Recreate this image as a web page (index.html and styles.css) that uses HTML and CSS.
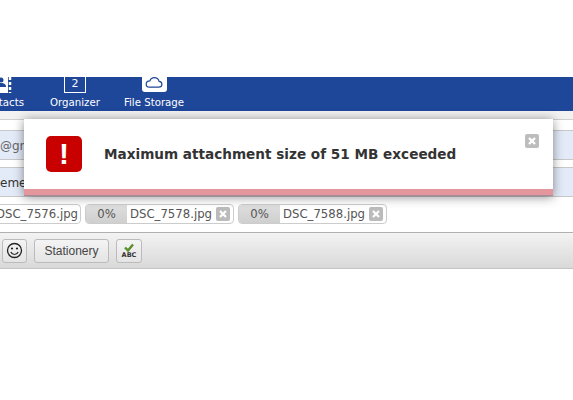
FILE: index.html
```html
<!DOCTYPE html>
<html lang="en">
<head>
    <meta charset="UTF-8">
    <title>Compose</title>
    <link rel="stylesheet" href="styles.css">
</head>
<body>
    <div class="page">
        <nav class="nav">
            <div class="nav-item nav-contacts">
                <svg class="nav-icon" width="12" height="17" viewBox="0 0 12 17">
                    <rect x="0" y="0" width="8" height="16" fill="#fff"/>
                    <circle cx="1" cy="3" r="2.500" fill="#1e4699"/>
                    <path d="M-4 10c0-3 2-4 5-4s5 1 5 4z" fill="#1e4699"/>
                    <path d="M10 0v16" stroke="#fff" stroke-width="2.500" stroke-dasharray="3 2"/>
                </svg>
                <span>Contacts</span>
            </div>
            <div class="nav-item nav-organizer">
                <div class="date-box">2</div>
                <span>Organizer</span>
            </div>
            <div class="nav-item nav-storage">
                <div class="cloud-box">
                    <svg width="18" height="11" viewBox="0 0 17 11">
                        <path d="M4 10.200h9.200c1.800 0 3.200-1.200 3.200-2.900 0-1.600-1.200-2.800-2.800-2.900C12.900 2 11 .7 8.900.7 6.800.7 5 2 4.400 3.900 2.300 4 .7 5.300.7 7.200c0 1.800 1.400 3 3.300 3z" fill="none" stroke="#1e4699" stroke-width="1.200"/>
                    </svg>
                </div>
                <span>File Storage</span>
            </div>
        </nav>

        <div class="form">
            <div class="field"><span class="field-text">@gm</span></div>
            <div class="field"><span class="field-text field-dark">eme</span></div>
        </div>

        <div class="attachments">
            <div class="chip chip-first">
                <span class="chip-name">DSC_7576.jpg</span>
            </div>
            <div class="chip">
                <span class="chip-pct">0%</span>
                <span class="chip-name">DSC_7578.jpg</span>
                <span class="chip-close">
                    <svg width="10" height="10" viewBox="0 0 10 10"><path d="M2 2l6 6M8 2l-6 6" stroke="#fff" stroke-width="2.200"/></svg>
                </span>
            </div>
            <div class="chip">
                <span class="chip-pct">0%</span>
                <span class="chip-name">DSC_7588.jpg</span>
                <span class="chip-close">
                    <svg width="10" height="10" viewBox="0 0 10 10"><path d="M2 2l6 6M8 2l-6 6" stroke="#fff" stroke-width="2.200"/></svg>
                </span>
            </div>
        </div>

        <div class="toolbar">
            <button class="tool tool-smiley">
                <svg width="17" height="17" viewBox="0 0 17 17">
                    <circle cx="8.500" cy="8.500" r="7" fill="none" stroke="#222" stroke-width="1.300"/>
                    <circle cx="6" cy="6.500" r="1.100" fill="#222"/>
                    <circle cx="11" cy="6.500" r="1.100" fill="#222"/>
                    <path d="M4.800 10c.8 1.700 2.100 2.500 3.700 2.500s2.900-.8 3.700-2.500" fill="none" stroke="#222" stroke-width="1.200"/>
                </svg>
            </button>
            <button class="tool tool-text">Stationery</button>
            <button class="tool tool-spell">
                <svg width="14" height="9" viewBox="0 0 14 9"><path d="M3 4.500l3 3 5-6" fill="none" stroke="#5a8f2c" stroke-width="2.400"/></svg>
                <span class="abc">ABC</span>
            </button>
        </div>

        <div class="alert">
            <div class="alert-body">
                <div class="alert-icon">!</div>
                <div class="alert-text">Maximum attachment size of 51 MB exceeded</div>
                <span class="alert-close">
                    <svg width="12" height="12" viewBox="0 0 12 12"><path d="M3 3l6 6M9 3l-6 6" stroke="#fff" stroke-width="2.400"/></svg>
                </span>
            </div>
            <div class="alert-bar"></div>
        </div>
    </div>
</body>
</html>
```

FILE: styles.css
```css
html, body { margin: 0; padding: 0; background: #fff; }
body { font-family: "DejaVu Sans", sans-serif; color: #333; }
.page { position: relative; width: 573px; height: 400px; overflow: hidden; padding-top: 77px; box-sizing: border-box; }

.nav { height: 34px; background: #1e4699; display: flex; overflow: hidden; color: #fff; font-size: 10.200px; }
.nav-item { position: relative; display: flex; flex-direction: column; align-items: center; }
.nav-item span { position: absolute; top: 20px; white-space: nowrap; }
.nav-contacts { width: 24px; }
.nav-contacts .nav-icon { position: absolute; left: 0; top: 0; }
.nav-contacts span { right: 0; }
.nav-organizer { width: 50px; margin-left: 26px; }
.date-box { width: 20px; height: 15px; border: 1px solid #fff; border-top: 0; text-align: center; font-size: 11px; line-height: 13px; }
.nav-storage { width: 60px; margin-left: 24px; }
.cloud-box { width: 25px; height: 15px; background: #fff; border-radius: 0 0 3px 3px; display: flex; justify-content: center; align-items: flex-end; padding-bottom: 4px; box-sizing: border-box; }

.form { height: 86px; box-sizing: border-box; background: #fff; display: flex; flex-direction: column; gap: 7px; border-top: 8px solid #f2f2f2; padding-top: 11px; position: relative; }
.form::before { content: ""; position: absolute; left: 0; right: 0; top: 0; height: 1px; background: #d0d0d0; }
.field { height: 30px; background: #e3ebf8; border-top: 1px solid #c8c8c8; border-bottom: 1px solid #c8c8c8; box-sizing: border-box; font-size: 12px; line-height: 30px; }
.field-text { color: #666; }
.field-dark { color: #333; }

.attachments { display: flex; gap: 4px; margin-left: -26px; padding-top: 7px; height: 35px; box-sizing: border-box; }
.chip { width: 149px; height: 20px; display: flex; align-items: center; background: #fff; border: 1px solid #ccc; border-radius: 4px; box-sizing: border-box; font-size: 11.700px; color: #555; overflow: hidden; }
.chip-first { width: 107px; justify-content: flex-end; padding-right: 2px; }
.chip-pct { width: 41px; height: 100%; flex: none; background: linear-gradient(#dedede, #cfcfcf); text-align: center; line-height: 18px; }
.chip-name { margin-left: 3px; white-space: nowrap; }
.chip-close { width: 14px; height: 14px; flex: none; margin: 0 2px 0 4px; background: #bbb; border-radius: 2px; display: flex; align-items: center; justify-content: center; }

.toolbar { height: 37px; background: linear-gradient(#f3f3f3, #d8d9d8); border-top: 1px solid #b0b0b0; border-bottom: 1px solid #c4c4c4; box-sizing: border-box; display: flex; align-items: center; gap: 7px; padding-left: 2px; }
.tool { height: 24px; padding: 0; background: linear-gradient(#f4f4f4, #e4e4e4); border: 1px solid #bbb; border-radius: 3px; display: flex; align-items: center; justify-content: center; color: #444; font: 12px "Liberation Sans", sans-serif; }
.tool-smiley { width: 25px; }
.tool-text { width: 75px; }
.tool-spell { width: 26px; flex-direction: column; }
.abc { font: bold 6.500px/7px "DejaVu Sans", sans-serif; color: #333; }

.alert { position: absolute; left: 24px; top: 119px; width: 529px; height: 77px; background: #fff; box-shadow: 0 1px 10px rgba(0, 0, 0, 0.45); display: flex; flex-direction: column; }
.alert-body { flex: 1; position: relative; display: flex; align-items: center; padding-left: 22px; }
.alert-icon { width: 36px; height: 36px; background: #c80000; border-radius: 5px; color: #fff; font: bold 30px/36px "Liberation Sans", sans-serif; text-align: center; }
.alert-text { margin-left: 22px; font-size: 13.600px; font-weight: bold; color: #333; white-space: nowrap; }
.alert-close { position: absolute; right: 14px; top: 15px; width: 14px; height: 14px; background: #bdbdbd; border-radius: 2px; display: flex; align-items: center; justify-content: center; }
.alert-bar { height: 7px; background: #e3969b; border-bottom: 1px solid #a98a9a; box-sizing: border-box; }
```
